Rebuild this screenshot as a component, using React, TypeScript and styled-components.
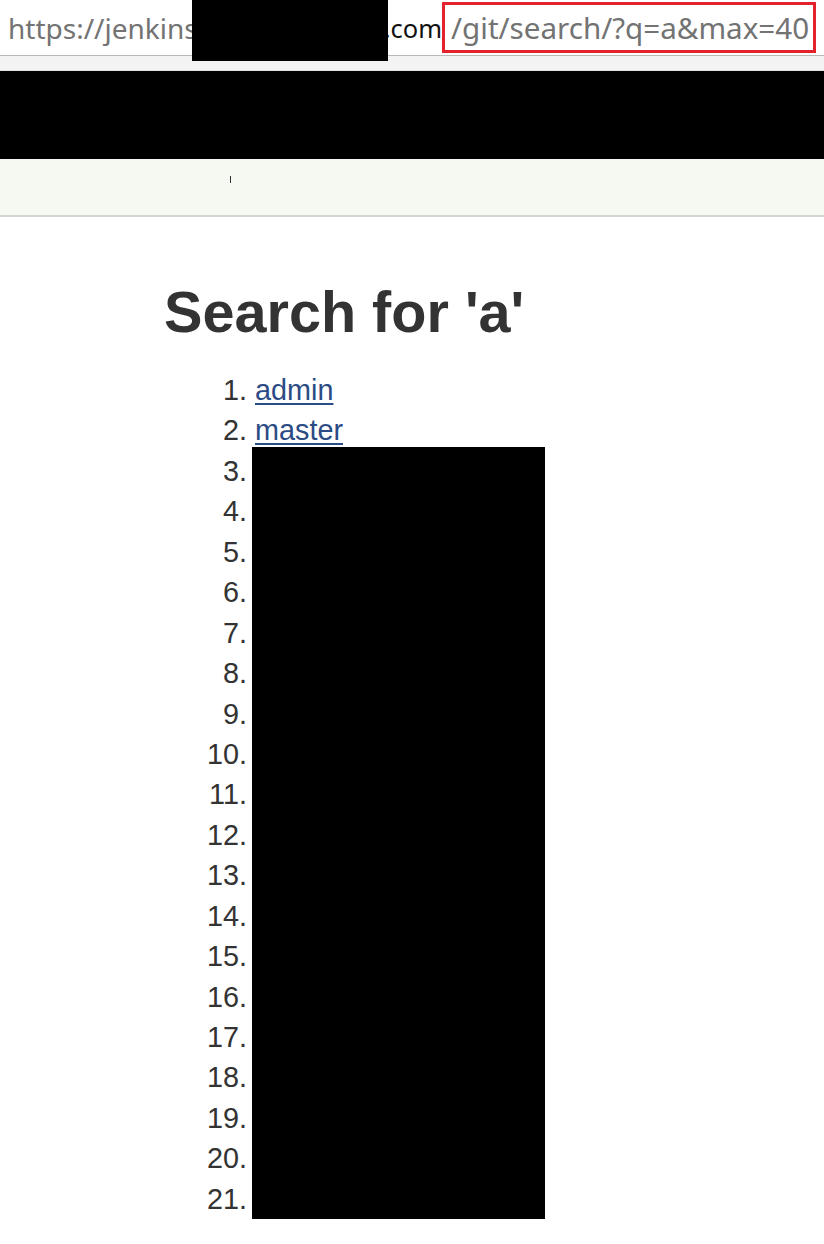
import React from "react";
import styled, { createGlobalStyle } from "styled-components";

const GlobalStyle = createGlobalStyle`
  html, body { margin: 0; padding: 0; background: #ffffff; }
  body { font-family: "Liberation Sans", Arial, sans-serif; }
`;

const Chrome = styled.div`
  position: relative;
`;

const AddressBar = styled.div`
  height: 56px;
  border-bottom: 1px solid #b9b9b9;
  display: flex;
  align-items: center;
  padding-left: 8px;
  font-family: "Noto Sans", "Open Sans", sans-serif;
  font-size: 28px;
  color: #737373;
  white-space: nowrap;
  box-sizing: border-box;
`;

const Host = styled.span`
  color: #737373;
`;

const HiddenPart = styled.span`
  flex: 0 0 auto;
  width: 186px;
`;

const Domain = styled.span`
  font-size: 25.5px;
  margin-right: 0;
  color: #111111;
`;

const Highlight = styled.span`
  display: inline-flex;
  align-items: center;
  height: 51px;
  box-sizing: border-box;
  border: 3px solid #e3222c;
  padding: 0 4px 0 6px;
  font-size: 29.6px;
  color: #737373;
`;

const Strip = styled.div`
  height: 14px;
  background: #f3f3f3;
  border-bottom: 1px solid #e2e2e2;
`;

const Redaction = styled.div<{ $l: number; $t: number; $w: number; $h: number }>`
  position: absolute;
  left: ${(p) => p.$l}px;
  top: ${(p) => p.$t}px;
  width: ${(p) => p.$w}px;
  height: ${(p) => p.$h}px;
  background: #000000;
`;

const HeaderBar = styled.header`
  height: 88px;
  background: #000000;
`;

const NavBand = styled.nav`
  height: 56px;
  background: #f6f8f2;
  border-bottom: 2px solid #d3d5cf;
  display: flex;
  align-items: flex-start;
  padding-left: 230px;
`;

const Caret = styled.span`
  display: block;
  width: 1px;
  height: 7px;
  margin-top: 17px;
  background: #333333;
`;

const Main = styled.main`
  padding-left: 164px;
  padding-top: 61px;
`;

const Title = styled.h1`
  margin: 0;
  font-family: "Liberation Sans", Arial, sans-serif;
  font-weight: bold;
  font-size: 57.6px;
  line-height: 69px;
  color: #333333;
`;

const ListWrap = styled.div`
  position: relative;
  margin-top: 23px;
`;

const Results = styled.ol`
  margin: 0;
  padding-left: 91px;
  font-family: "Liberation Sans", Arial, sans-serif;
  font-size: 28.8px;
  line-height: 40.45px;
  color: #333333;
`;

const Item = styled.li`
  height: 40.45px;
`;

const ResultLink = styled.a`
  color: #2b4b85;
  text-decoration: underline;
  text-underline-offset: 3px;
`;

const named = ["admin", "master"];

export default function App() {
  const items = Array.from({ length: 21 }, (_, i) => named[i] ?? "");
  return (
    <>
      <GlobalStyle />
      <Chrome>
        <AddressBar>
          <Host>https://jenkins</Host>
          <HiddenPart />
          <Domain>.com</Domain>
          <Highlight>/git/search/?q=a&amp;max=40</Highlight>
        </AddressBar>
        <Strip />
        <Redaction $l={192} $t={0} $w={196} $h={61} />
      </Chrome>
      <HeaderBar />
      <NavBand>
        <Caret />
      </NavBand>
      <Main>
        <Title>Search for 'a'</Title>
        <ListWrap>
          <Results>
            {items.map((name, i) => (
              <Item key={i}>
                {name ? <ResultLink href="#">{name}</ResultLink> : null}
              </Item>
            ))}
          </Results>
          <Redaction $l={88} $t={77} $w={293} $h={772} />
        </ListWrap>
      </Main>
    </>
  );
}
